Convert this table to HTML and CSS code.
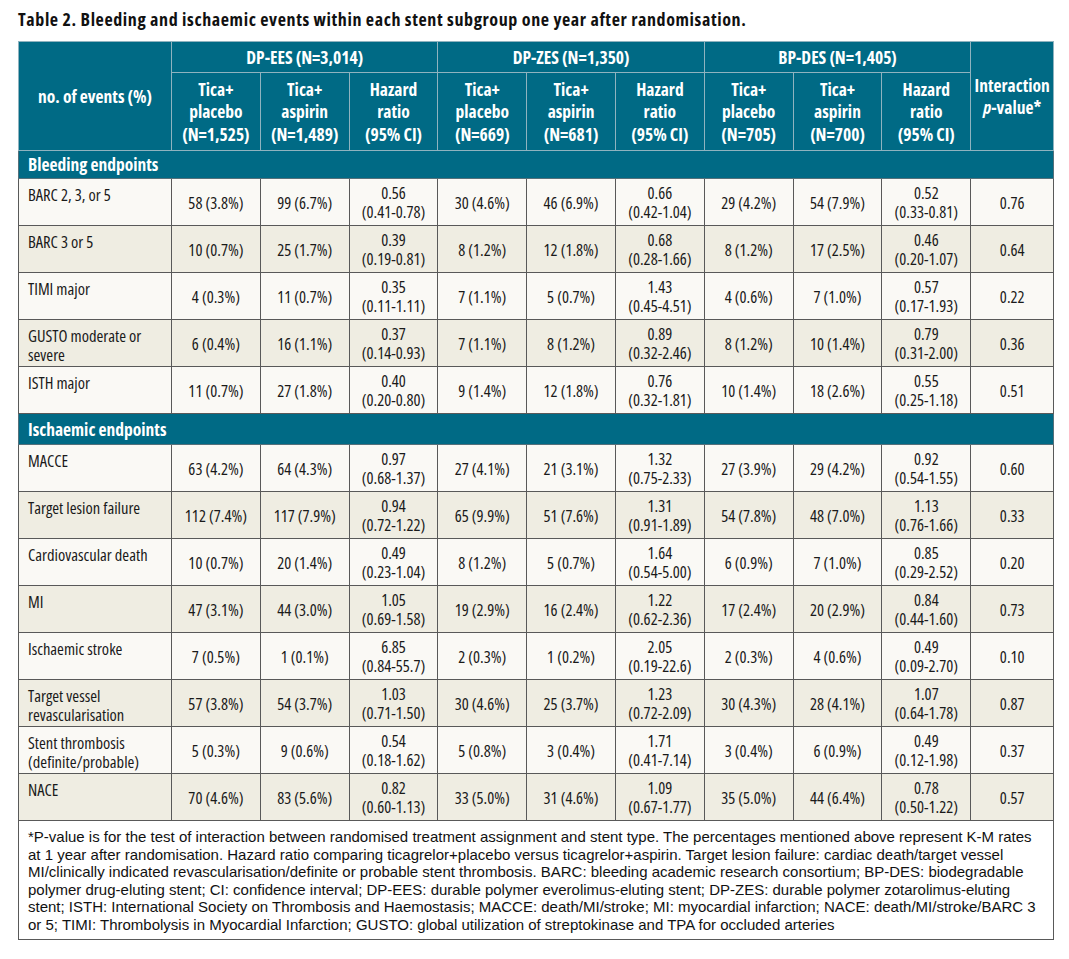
FILE: index.html
```html
<!DOCTYPE html>
<html>
<head>
<meta charset="utf-8">
<link rel="stylesheet" href="styles.css">
</head>
<body>
<div class="page">
  <h1 class="title">Table 2. Bleeding and ischaemic events within each stent subgroup one year after randomisation.</h1>
  <table class="tbl">
    <colgroup>
      <col class="c-label">
      <col class="c-num"><col class="c-num"><col class="c-num">
      <col class="c-num"><col class="c-num"><col class="c-num">
      <col class="c-num"><col class="c-num"><col class="c-num">
      <col class="c-p">
    </colgroup>
    <thead>
      <tr class="h1">
        <th rowspan="2" class="h-label">no. of events (%)</th>
        <th colspan="3">DP-EES (N=3,014)</th>
        <th colspan="3">DP-ZES (N=1,350)</th>
        <th colspan="3">BP-DES (N=1,405)</th>
        <th rowspan="2" class="h-p">Interaction<br><i>p</i>-value*</th>
      </tr>
      <tr class="h2">
        <th>Tica+<br>placebo<br>(N=1,525)</th>
        <th>Tica+<br>aspirin<br>(N=1,489)</th>
        <th>Hazard<br>ratio<br>(95% CI)</th>
        <th>Tica+<br>placebo<br>(N=669)</th>
        <th>Tica+<br>aspirin<br>(N=681)</th>
        <th>Hazard<br>ratio<br>(95% CI)</th>
        <th>Tica+<br>placebo<br>(N=705)</th>
        <th>Tica+<br>aspirin<br>(N=700)</th>
        <th>Hazard<br>ratio<br>(95% CI)</th>
      </tr>
    </thead>
    <tbody>
      <tr class="sec"><td colspan="11">Bleeding endpoints</td></tr>
      <tr class="odd"><td class="lbl">BARC 2, 3, or 5</td><td>58 (3.8%)</td><td>99 (6.7%)</td><td>0.56<br>(0.41-0.78)</td><td>30 (4.6%)</td><td>46 (6.9%)</td><td>0.66<br>(0.42-1.04)</td><td>29 (4.2%)</td><td>54 (7.9%)</td><td>0.52<br>(0.33-0.81)</td><td>0.76</td></tr>
      <tr class="even"><td class="lbl">BARC 3 or 5</td><td>10 (0.7%)</td><td>25 (1.7%)</td><td>0.39<br>(0.19-0.81)</td><td>8 (1.2%)</td><td>12 (1.8%)</td><td>0.68<br>(0.28-1.66)</td><td>8 (1.2%)</td><td>17 (2.5%)</td><td>0.46<br>(0.20-1.07)</td><td>0.64</td></tr>
      <tr class="odd"><td class="lbl">TIMI major</td><td>4 (0.3%)</td><td>11 (0.7%)</td><td>0.35<br>(0.11-1.11)</td><td>7 (1.1%)</td><td>5 (0.7%)</td><td>1.43<br>(0.45-4.51)</td><td>4 (0.6%)</td><td>7 (1.0%)</td><td>0.57<br>(0.17-1.93)</td><td>0.22</td></tr>
      <tr class="even"><td class="lbl">GUSTO moderate or severe</td><td>6 (0.4%)</td><td>16 (1.1%)</td><td>0.37<br>(0.14-0.93)</td><td>7 (1.1%)</td><td>8 (1.2%)</td><td>0.89<br>(0.32-2.46)</td><td>8 (1.2%)</td><td>10 (1.4%)</td><td>0.79<br>(0.31-2.00)</td><td>0.36</td></tr>
      <tr class="odd"><td class="lbl">ISTH major</td><td>11 (0.7%)</td><td>27 (1.8%)</td><td>0.40<br>(0.20-0.80)</td><td>9 (1.4%)</td><td>12 (1.8%)</td><td>0.76<br>(0.32-1.81)</td><td>10 (1.4%)</td><td>18 (2.6%)</td><td>0.55<br>(0.25-1.18)</td><td>0.51</td></tr>
      <tr class="sec sec2"><td colspan="11">Ischaemic endpoints</td></tr>
      <tr class="odd"><td class="lbl">MACCE</td><td>63 (4.2%)</td><td>64 (4.3%)</td><td>0.97<br>(0.68-1.37)</td><td>27 (4.1%)</td><td>21 (3.1%)</td><td>1.32<br>(0.75-2.33)</td><td>27 (3.9%)</td><td>29 (4.2%)</td><td>0.92<br>(0.54-1.55)</td><td>0.60</td></tr>
      <tr class="even"><td class="lbl">Target lesion failure</td><td>112 (7.4%)</td><td>117 (7.9%)</td><td>0.94<br>(0.72-1.22)</td><td>65 (9.9%)</td><td>51 (7.6%)</td><td>1.31<br>(0.91-1.89)</td><td>54 (7.8%)</td><td>48 (7.0%)</td><td>1.13<br>(0.76-1.66)</td><td>0.33</td></tr>
      <tr class="odd"><td class="lbl">Cardiovascular death</td><td>10 (0.7%)</td><td>20 (1.4%)</td><td>0.49<br>(0.23-1.04)</td><td>8 (1.2%)</td><td>5 (0.7%)</td><td>1.64<br>(0.54-5.00)</td><td>6 (0.9%)</td><td>7 (1.0%)</td><td>0.85<br>(0.29-2.52)</td><td>0.20</td></tr>
      <tr class="even"><td class="lbl">MI</td><td>47 (3.1%)</td><td>44 (3.0%)</td><td>1.05<br>(0.69-1.58)</td><td>19 (2.9%)</td><td>16 (2.4%)</td><td>1.22<br>(0.62-2.36)</td><td>17 (2.4%)</td><td>20 (2.9%)</td><td>0.84<br>(0.44-1.60)</td><td>0.73</td></tr>
      <tr class="odd"><td class="lbl">Ischaemic stroke</td><td>7 (0.5%)</td><td>1 (0.1%)</td><td>6.85<br>(0.84-55.7)</td><td>2 (0.3%)</td><td>1 (0.2%)</td><td>2.05<br>(0.19-22.6)</td><td>2 (0.3%)</td><td>4 (0.6%)</td><td>0.49<br>(0.09-2.70)</td><td>0.10</td></tr>
      <tr class="even"><td class="lbl">Target vessel revascularisation</td><td>57 (3.8%)</td><td>54 (3.7%)</td><td>1.03<br>(0.71-1.50)</td><td>30 (4.6%)</td><td>25 (3.7%)</td><td>1.23<br>(0.72-2.09)</td><td>30 (4.3%)</td><td>28 (4.1%)</td><td>1.07<br>(0.64-1.78)</td><td>0.87</td></tr>
      <tr class="odd"><td class="lbl">Stent thrombosis (definite/probable)</td><td>5 (0.3%)</td><td>9 (0.6%)</td><td>0.54<br>(0.18-1.62)</td><td>5 (0.8%)</td><td>3 (0.4%)</td><td>1.71<br>(0.41-7.14)</td><td>3 (0.4%)</td><td>6 (0.9%)</td><td>0.49<br>(0.12-1.98)</td><td>0.37</td></tr>
      <tr class="even"><td class="lbl">NACE</td><td>70 (4.6%)</td><td>83 (5.6%)</td><td>0.82<br>(0.60-1.13)</td><td>33 (5.0%)</td><td>31 (4.6%)</td><td>1.09<br>(0.67-1.77)</td><td>35 (5.0%)</td><td>44 (6.4%)</td><td>0.78<br>(0.50-1.22)</td><td>0.57</td></tr>
      <tr class="foot"><td colspan="11">*P-value is for the test of interaction between randomised treatment assignment and stent type. The percentages mentioned above represent K-M rates at 1 year after randomisation. Hazard ratio comparing ticagrelor+placebo versus ticagrelor+aspirin. Target lesion failure: cardiac death/target vessel MI/clinically indicated revascularisation/definite or probable stent thrombosis. BARC: bleeding academic research consortium; BP-DES: biodegradable polymer drug-eluting stent; CI: confidence interval; DP-EES: durable polymer everolimus-eluting stent; DP-ZES: durable polymer zotarolimus-eluting stent; ISTH: International Society on Thrombosis and Haemostasis; MACCE: death/MI/stroke; MI: myocardial infarction; NACE: death/MI/stroke/BARC 3 or 5; TIMI: Thrombolysis in Myocardial Infarction; GUSTO: global utilization of streptokinase and TPA for occluded arteries</td></tr>
    </tbody>
  </table>
</div>
</body>
</html>
```

FILE: styles.css
```css
html, body {
  margin: 0;
  padding: 0;
  background: #ffffff;
}

.page {
  padding: 8px 0 0 18px;
  width: 1035px;
  font-family: "Open Sans", "DejaVu Sans Condensed", sans-serif;
  font-stretch: 75%;
  color: #1a1a1a;
}

.title {
  margin: 0 0 11px 0;
  font-size: 18px;
  line-height: 22px;
  font-weight: bold;
  letter-spacing: 0.6px;
  color: #111;
}

.tbl {
  width: 1035px;
  border-collapse: collapse;
  table-layout: fixed;
  font-size: 16.5px;
  line-height: 19px;
}

.c-label { width: 153px; }
.c-num { width: 88.8px; }
.c-p { width: 83px; }

.tbl th {
  background: #006a85;
  color: #ffffff;
  font-weight: bold;
  font-size: 17.5px;
  line-height: 22.5px;
  border: 1px solid #8fb3bf;
  padding: 0;
  text-align: center;
  vertical-align: middle;
}

.h1 th { height: 30px; }
.h2 th { height: 77px; }

.sec td {
  background: #006a85;
  color: #ffffff;
  font-weight: bold;
  font-size: 17.5px;
  height: 27px;
  padding: 0 0 0 9px;
  border: 1px solid #55707a;
  border-top-color: #8fb3bf;
  vertical-align: middle;
}

.sec2 td {
  height: 30px;
}

.odd td, .even td {
  height: 46px;
  text-align: center;
  vertical-align: middle;
  padding: 0;
  border: 1px solid #595959;
}

.odd td { background: #faf9f5; }
.even td { background: #efede2; }

.odd td.lbl, .even td.lbl {
  height: 40px;
  text-align: left;
  vertical-align: top;
  padding: 6px 8px 0 9px;
}

.foot td {
  background: #ffffff;
  border: 1px solid #595959;
  font-family: "Liberation Sans", "Arial", sans-serif;
  font-stretch: normal;
  font-size: 15px;
  line-height: 17.5px;
  padding: 7px 10px 6px 9px;
  text-align: left;
  color: #111;
}
```
